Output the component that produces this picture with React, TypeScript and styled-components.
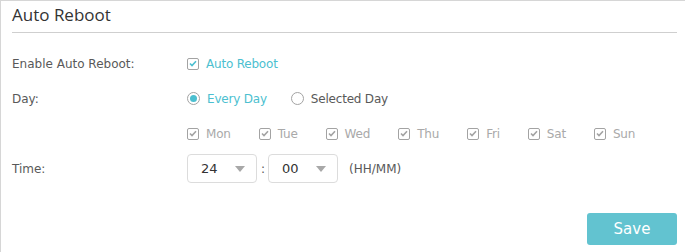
import styled, { createGlobalStyle } from 'styled-components';

const GlobalStyle = createGlobalStyle`
  html, body {
    margin: 0;
    padding: 0;
    background: #ffffff;
  }
  body {
    font-family: "DejaVu Sans", Verdana, sans-serif;
    font-size: 12px;
  }
`;

const Panel = styled.section`
  box-sizing: border-box;
  width: 685px;
  height: 252px;
  border-top: 1px solid #d6d6d6;
  border-left: 1px solid #d6d6d6;
  padding: 0 8px 0 11px;
  display: flex;
  flex-direction: column;
`;

const Title = styled.h2`
  margin: 0;
  padding: 3px 0 6px;
  font-family: "Open Sans", "Noto Sans", sans-serif;
  font-weight: 400;
  font-size: 17px;
  line-height: 22px;
  color: #333333;
  border-bottom: 1px solid #cfcfcf;
`;

const Form = styled.div`
  display: flex;
  flex-direction: column;
  padding-top: 13px;
`;

const Row = styled.div`
  display: flex;
  align-items: center;
  height: 35px;
`;

const Label = styled.div`
  width: 175px;
  flex: none;
  color: #595959;
`;

const Controls = styled.div<{ $gap?: number }>`
  display: flex;
  align-items: center;
  gap: ${p => p.$gap ?? 0}px;
`;

const Option = styled.label<{ $tone: 'accent' | 'plain' | 'muted' }>`
  display: flex;
  align-items: center;
  gap: 7px;
  letter-spacing: -0.2px;
  color: ${p => (p.$tone === 'accent' ? '#4cbfd0' : p.$tone === 'muted' ? '#a9a9a9' : '#595959')};
`;

const Box = styled.span`
  box-sizing: border-box;
  width: 12px;
  height: 12px;
  border: 1px solid #a3a3a3;
  border-radius: 2px;
  display: flex;
  align-items: center;
  justify-content: center;
`;

const Radio = styled.span<{ $on?: boolean }>`
  box-sizing: border-box;
  width: 13px;
  height: 13px;
  border: 1px solid #a3a3a3;
  border-radius: 50%;
  display: flex;
  align-items: center;
  justify-content: center;

  &::after {
    content: '';
    width: 7px;
    height: 7px;
    border-radius: 50%;
    background: ${p => (p.$on ? '#4cbfd0' : 'transparent')};
  }
`;

const Select = styled.div`
  box-sizing: border-box;
  width: 70px;
  height: 29px;
  border: 1px solid #dcdcdc;
  border-radius: 4px;
  display: flex;
  align-items: center;
  justify-content: space-between;
  padding: 0 11px 0 13px;
  color: #333333;
  font-size: 13px;
`;

const Colon = styled.span`
  color: #595959;
  padding: 0 3px 0 4px;
`;

const Hint = styled.span`
  color: #595959;
  margin-left: 11px;
`;

const Footer = styled.div`
  margin-top: auto;
  display: flex;
  justify-content: flex-end;
  padding-bottom: 7px;
`;

const SaveButton = styled.button`
  width: 90px;
  height: 32px;
  border: none;
  border-radius: 3px;
  background: #62c3d0;
  color: #ffffff;
  font-family: "DejaVu Sans", Verdana, sans-serif;
  font-size: 15px;
  padding: 0;
`;

const Check = ({ color }: { color: string }) => (
  <Box>
    <svg width="8" height="7" viewBox="0 0 8 7">
      <path d="M1 3.5 L3 5.5 L7 1.2" fill="none" stroke={color} strokeWidth="1.6" />
    </svg>
  </Box>
);

const Caret = () => (
  <svg width="10" height="6" viewBox="0 0 10 6">
    <path d="M0 0 H10 L5 6 Z" fill="#a8a8a8" />
  </svg>
);

const days = ['Mon', 'Tue', 'Wed', 'Thu', 'Fri', 'Sat', 'Sun'];

export default function App() {
  return (
    <>
      <GlobalStyle />
      <Panel>
        <Title>Auto Reboot</Title>
        <Form>
          <Row>
            <Label>Enable Auto Reboot:</Label>
            <Controls>
              <Option $tone="accent">
                <Check color="#4cbfd0" />
                Auto Reboot
              </Option>
            </Controls>
          </Row>
          <Row>
            <Label>Day:</Label>
            <Controls $gap={24}>
              <Option $tone="accent">
                <Radio $on />
                Every Day
              </Option>
              <Option $tone="plain">
                <Radio />
                Selected Day
              </Option>
            </Controls>
          </Row>
          <Row>
            <Label />
            <Controls $gap={28}>
              {days.map(day => (
                <Option key={day} $tone="muted">
                  <Check color="#a3a3a3" />
                  {day}
                </Option>
              ))}
            </Controls>
          </Row>
          <Row>
            <Label>Time:</Label>
            <Controls>
              <Select>
                24
                <Caret />
              </Select>
              <Colon>:</Colon>
              <Select>
                00
                <Caret />
              </Select>
              <Hint>(HH/MM)</Hint>
            </Controls>
          </Row>
        </Form>
        <Footer>
          <SaveButton>Save</SaveButton>
        </Footer>
      </Panel>
    </>
  );
}
